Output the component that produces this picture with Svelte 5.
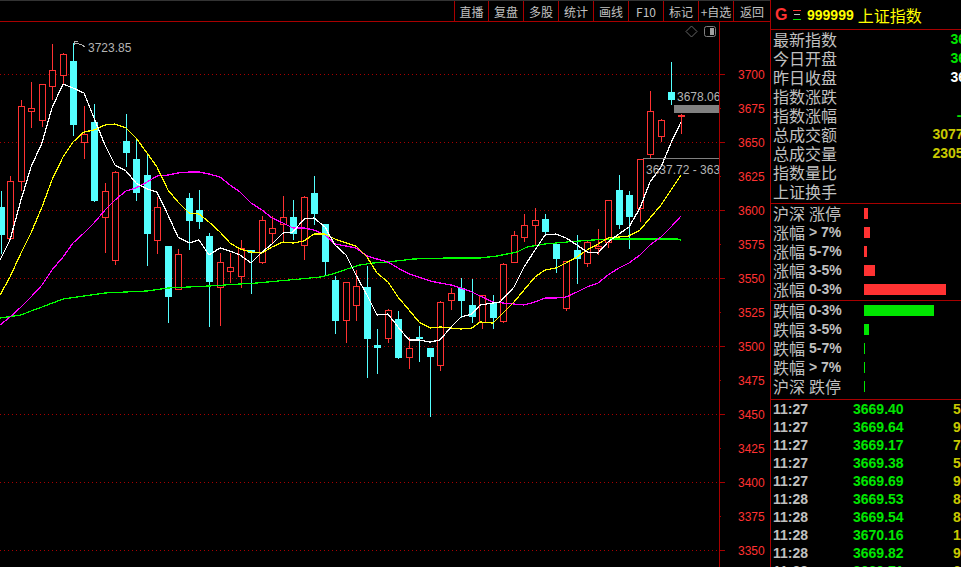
<script lang="ts">
    const RED = "#ff3232";
    const CYAN = "#54ffff";

    const tools = ["直播", "复盘", "多股", "统计", "画线", "F10", "标记", "+自选", "返回"];

    // x, high, top, bottom, low, rising
    const candles: [number, number, number, number, number, boolean][] = [
        [1, 191, 207, 235, 253, false], [10, 176, 181, 238, 238, true], [21, 100, 106, 181, 190, true],
        [31, 82, 108, 111, 127, true], [42, 84, 84, 120, 126, true], [52, 44, 70, 86, 99, true],
        [63, 53, 54, 75, 84, true], [73, 43, 61, 125, 135, false], [84, 106, 134, 142, 158, true],
        [94, 104, 122, 201, 201, false], [105, 183, 191, 217, 252, true], [115, 171, 172, 260, 264, true],
        [126, 114, 141, 153, 166, false], [136, 140, 159, 193, 200, false], [147, 155, 175, 234, 265, false],
        [157, 197, 207, 240, 253, true], [168, 246, 246, 297, 322, false], [178, 249, 254, 289, 289, true],
        [189, 193, 198, 221, 249, false], [199, 190, 210, 222, 228, false], [209, 233, 236, 282, 326, false],
        [220, 253, 262, 287, 325, true], [230, 253, 267, 271, 282, true], [241, 240, 248, 276, 287, true],
        [251, 250, 250, 253, 293, false], [262, 216, 220, 262, 263, true], [272, 216, 228, 233, 243, true],
        [283, 196, 217, 224, 242, true], [293, 200, 217, 234, 239, false], [304, 196, 197, 245, 259, true],
        [314, 176, 193, 214, 224, false], [325, 224, 224, 262, 274, false], [335, 276, 280, 321, 333, false],
        [346, 282, 282, 320, 342, true], [356, 270, 286, 305, 320, true], [367, 266, 287, 339, 377, false],
        [377, 329, 345, 348, 373, false], [388, 309, 310, 338, 342, true], [398, 311, 319, 358, 358, false],
        [409, 337, 348, 357, 368, true], [419, 326, 337, 338, 361, false], [430, 348, 348, 357, 416, false],
        [440, 301, 302, 365, 370, true], [451, 288, 293, 300, 309, true], [461, 278, 288, 301, 317, false],
        [472, 279, 305, 317, 322, false], [482, 295, 295, 322, 328, true], [493, 295, 303, 318, 328, false],
        [503, 263, 264, 321, 322, true], [514, 231, 235, 262, 262, true], [524, 214, 225, 237, 241, true],
        [535, 208, 220, 225, 244, true], [545, 214, 219, 232, 235, false], [556, 243, 244, 259, 272, false],
        [566, 261, 261, 308, 310, true], [577, 235, 250, 259, 283, false], [587, 241, 242, 263, 266, true],
        [598, 229, 246, 248, 254, true], [608, 200, 200, 242, 247, true], [619, 175, 190, 225, 228, false],
        [629, 191, 195, 217, 248, false], [640, 159, 159, 208, 221, true], [650, 91, 111, 154, 158, true],
        [661, 119, 120, 136, 141, true], [671, 62, 92, 100, 104, false], [681, 114, 115, 115, 133, true],
    ];

    const ma5 = "0,260 10,240 21,200 31,167 42,143 52,108 63,84 73,88 84,93 94,118 105,145 115,165 126,171 136,183 147,189 157,192 168,215 178,237 189,243 199,240 209,255 220,248 230,251 240,255 251,263 262,252 272,244 283,233 293,232 304,219 314,218 325,227 335,245 346,255 356,275 367,295 377,315 388,314 398,327 409,340 419,340 430,342 440,340 451,327 461,317 472,314 480,305 500,302 514,287 524,267 535,250 545,235 556,234 566,238 577,245 587,252 598,253 608,242 619,234 629,227 640,208 650,182 661,167 671,143 681,122";
    const ma10 = "0,295 10,277 21,253 31,233 42,207 52,180 63,157 73,142 84,132 94,130 105,125 115,124 126,128 136,138 147,153 157,167 168,190 178,202 189,213 199,214 209,222 220,232 230,243 240,249 251,252 262,253 272,247 283,242 293,243 304,241 314,234 325,234 335,239 346,243 356,246 367,257 377,273 388,282 398,297 409,310 419,322 430,328 440,327 451,328 461,329 472,328 480,322 493,323 503,313 514,302 524,290 535,277 545,270 556,268 566,263 577,257 587,250 598,244 608,238 619,237 629,236 640,230 650,218 661,205 671,190 681,175";
    const ma20 = "0,325 10,317 21,307 31,297 42,285 52,270 63,257 73,243 84,233 94,223 105,210 115,200 126,191 136,188 147,182 157,176 168,175 178,173 189,172 199,172 209,174 220,177 230,185 240,192 251,203 262,210 272,218 283,223 293,228 304,228 314,230 325,235 335,244 346,246 356,248 367,256 377,259 388,262 398,268 409,274 419,277 430,281 440,283 451,285 461,288 472,292 480,296 493,302 503,303 514,304 524,305 535,302 545,298 556,298 566,297 577,292 587,287 598,283 608,275 619,268 629,263 640,255 650,245 661,237 671,227 681,216";
    const ma60 = "0,318 21,315 31,311 42,307 63,299 84,296 105,293 126,292 147,291 168,288 189,287 209,286 240,284 257,283 278,281 300,279 320,277 333,274 347,269 360,265 373,263 388,262 413,259 447,258 480,258 497,256 517,252 527,247 545,244 567,242 593,240 613,239 677,239 681,240";

    const scale = Array.from({ length: 15 }, (_, i) => ({ label: 3700 - i * 25, y: 74 + i * 34, major: i % 2 === 0 }));

    const info = [
        { label: "最新指数", value: "3669.40", tone: "green" },
        { label: "今日开盘", value: "3672.18", tone: "green" },
        { label: "昨日收盘", value: "3678.06", tone: "white" },
        { label: "指数涨跌", value: "-8.66", tone: "green" },
        { label: "指数涨幅", value: "-0.24%", tone: "green" },
        { label: "总成交额", value: "3077.86 亿", tone: "olive" },
        { label: "总成交量", value: "2305.42 万", tone: "olive" },
        { label: "指数量比", value: "", tone: "olive" },
        { label: "上证换手", value: "", tone: "olive" },
    ];

    const ups = [
        { head: "沪深", tail: "涨停", cjk: true, width: 4 },
        { head: "涨幅", tail: "> 7%", cjk: false, width: 6 },
        { head: "涨幅", tail: "5-7%", cjk: false, width: 3 },
        { head: "涨幅", tail: "3-5%", cjk: false, width: 11 },
        { head: "涨幅", tail: "0-3%", cjk: false, width: 82 },
    ];
    const downs = [
        { head: "跌幅", tail: "0-3%", cjk: false, width: 70 },
        { head: "跌幅", tail: "3-5%", cjk: false, width: 5 },
        { head: "跌幅", tail: "5-7%", cjk: false, width: 1 },
        { head: "跌幅", tail: "> 7%", cjk: false, width: 1 },
        { head: "沪深", tail: "跌停", cjk: true, width: 1 },
    ];

    const ticks = [
        ["11:27", "3669.40", "52"], ["11:27", "3669.64", "96"], ["11:27", "3669.17", "74"],
        ["11:27", "3669.38", "58"], ["11:27", "3669.69", "91"], ["11:28", "3669.53", "83"],
        ["11:28", "3669.54", "87"], ["11:28", "3670.16", "1"], ["11:28", "3669.82", "95"],
        ["11:28", "3669.71", "60"],
    ];
</script>

<div class="screen">
    <div class="left">
        <div class="toolbar">
            {#each tools as tool}
                <div class="tool">{tool}</div>
            {/each}
        </div>
        <svg class="chart" width="770" height="545" viewBox="0 22 770 545">
            <defs>
                <clipPath id="plot"><rect x="0" y="22" width="719" height="545" /></clipPath>
            </defs>

            {#each scale as s}
                {#if s.major}
                    <line class="grid" x1="0" x2="719" y1={s.y + 0.5} y2={s.y + 0.5} />
                {/if}
                <rect x="719" y={s.y} width={s.major ? 6 : 2} height="1" fill="#a80000" />
                <text class="axis" x="738" y={s.y + 5}>{s.label}</text>
            {/each}

            {#each candles as [x, high, top, bottom, low, rising]}
                <rect x={x} y={high} width="1" height={low - high + 1} fill={rising ? RED : CYAN} />
                {#if rising}
                    <rect x={x - 2.5} y={top + 0.5} width="6" height={Math.max(bottom - top, 1)} fill="#000" stroke={RED} />
                {:else}
                    <rect x={x - 3} y={top} width="7" height={Math.max(bottom - top, 2)} fill={CYAN} />
                {/if}
            {/each}

            <polyline class="ma" points={ma60} stroke="#00ff00" />
            <polyline class="ma" points={ma20} stroke="#ff00ff" />
            <polyline class="ma" points={ma10} stroke="#ffff00" />
            <polyline class="ma" points={ma5} stroke="#ffffff" />

            <rect x="719" y="22" width="1" height="545" fill="#a80000" />

            <!-- annotations on top of the candles -->
            <path class="note" d="M74.5 45V41.5H77.5M74.5 43.5H77M77 43.5L81 44.5L85 47" />
            <text class="label" x="88" y="52">3723.85</text>

            <g clip-path="url(#plot)">
                <text class="label" x="677" y="101">3678.06</text>
                <rect x="674" y="105" width="45" height="8" fill="#808080" />
                <rect x="643" y="158" width="76" height="1" fill="#808080" />
                <text class="label" x="646" y="174">3637.72 - 3639.80</text>
            </g>

            <path d="M691.5 26L697 31.5L691.5 37L686 31.5Z" fill="none" stroke="#666" />
            <rect class="soft" x="704.5" y="26.5" width="11" height="10" rx="2" fill="none" stroke="#808080" />
            <rect x="710" y="28" width="4" height="7" fill="#a0a0a0" />
        </svg>
    </div>

    <aside class="side">
        <header class="title">
            <span class="g">G</span>
            <svg class="menu" width="8" height="11" viewBox="0 0 8 11">
                <rect x="0" y="0" width="8" height="1" fill={RED} />
                <rect x="1" y="4" width="6" height="1" fill="#c0c0c0" />
                <rect x="0" y="9" width="8" height="1" fill="#00e600" />
            </svg>
            <span class="code">999999</span>
            <span class="name">上证指数</span>
        </header>

        <section class="info">
            {#each info as row}
                <div class="row">
                    <span>{row.label}</span>
                    <span class="num {row.tone}">{row.value}</span>
                </div>
            {/each}
        </section>

        <section class="breadth first">
            {#each ups as row}
                <div class="bar-row">
                    <span class="bar-label">{row.head}<span class:num={!row.cjk} class="tail">{row.tail}</span></span>
                    <span class="bar up" style="width: {row.width}px"></span>
                </div>
            {/each}
        </section>

        <section class="breadth second">
            {#each downs as row}
                <div class="bar-row">
                    <span class="bar-label">{row.head}<span class:num={!row.cjk} class="tail">{row.tail}</span></span>
                    <span class="bar down" style="width: {row.width}px"></span>
                </div>
            {/each}
        </section>

        <section class="ticks">
            {#each ticks as [time, price, vol]}
                <div class="tick num">
                    <span>{time}</span>
                    <span class="green">{price}</span>
                    <span class="olive">{vol}</span>
                </div>
            {/each}
        </section>
    </aside>
</div>

<style>
    :global(body) {
        margin: 0;
        background: #000;
    }

    .screen {
        display: flex;
        width: 961px;
        height: 567px;
        overflow: hidden;
        background: #000;
        color: #c0c0c0;
        font-family: "Noto Sans CJK SC", "Liberation Sans", sans-serif;
    }

    .left {
        width: 770px;
        flex: none;
    }

    .toolbar {
        display: grid;
        grid-template-columns: 34px repeat(7, 35px) 37px;
        justify-content: end;
        box-sizing: border-box;
        height: 22px;
        border-bottom: 1px solid #a80000;
        border-top: 1px solid #333;
    }

    .tool {
        display: flex;
        align-items: center;
        justify-content: center;
        border-left: 1px solid #a80000;
        font-size: 12px;
        white-space: nowrap;
    }

    .chart {
        display: block;
    }

    .grid {
        stroke: #a80000;
        stroke-dasharray: 1 3;
        shape-rendering: crispEdges;
    }

    .axis {
        fill: #ff3232;
        font-family: "Liberation Sans", sans-serif;
        font-size: 12px;
    }

    .label {
        fill: #b4b4b4;
        font-family: "Liberation Sans", sans-serif;
        font-size: 12px;
    }

    .note {
        fill: none;
        stroke: #b4b4b4;
        shape-rendering: crispEdges;
    }

    .ma {
        fill: none;
        stroke-width: 1.25;
        shape-rendering: crispEdges;
    }

    .chart rect {
        shape-rendering: crispEdges;
    }

    .chart rect.soft {
        shape-rendering: auto;
    }

    .side {
        width: 191px;
        flex: none;
        box-sizing: border-box;
        border-left: 1px solid #a80000;
        overflow: hidden;
    }

    .title {
        display: flex;
        align-items: center;
        box-sizing: border-box;
        height: 30px;
        padding-left: 4px;
        border-bottom: 1px solid #a80000;
    }

    .g {
        width: 18px;
        color: #ff3232;
        font-family: "Liberation Sans", sans-serif;
        font-size: 16px;
        font-weight: 700;
    }

    .menu {
        flex: none;
        margin-top: 1px;
    }

    .code {
        margin-left: 6px;
        color: #ffff00;
        font-family: "Liberation Sans", sans-serif;
        font-size: 14px;
        font-weight: 700;
    }

    .name {
        margin-left: 4px;
        color: #ffff00;
        font-size: 16px;
    }

    .info {
        box-sizing: border-box;
        height: 174px;
        padding-left: 2px;
        border-bottom: 1px solid #a80000;
    }

    .row {
        display: flex;
        justify-content: space-between;
        width: 228px;
        height: 19px;
        font-size: 16px;
        line-height: 19px;
        white-space: nowrap;
    }

    .num {
        font-family: "Liberation Sans", sans-serif;
        font-size: 14px;
        font-weight: 700;
    }

    .green {
        color: #00e600;
    }

    .white {
        color: #fff;
    }

    .olive {
        color: #c8c800;
    }

    .breadth {
        box-sizing: border-box;
        padding-left: 2px;
        border-bottom: 1px solid #a80000;
    }

    .first {
        height: 97px;
    }

    .second {
        height: 99px;
    }

    .bar-row {
        display: flex;
        align-items: center;
        height: 19px;
        font-size: 16px;
        line-height: 19px;
    }

    .bar-label {
        display: flex;
        width: 91px;
        flex: none;
        white-space: nowrap;
    }

    .tail {
        margin-left: 4px;
    }

    .bar {
        display: block;
        height: 11px;
    }

    .up {
        background: #ff3232;
    }

    .down {
        background: #00e600;
    }

    .ticks {
        padding-left: 2px;
    }

    .tick {
        display: grid;
        grid-template-columns: 80px 100px auto;
        height: 18px;
        line-height: 18px;
        white-space: nowrap;
    }
</style>
